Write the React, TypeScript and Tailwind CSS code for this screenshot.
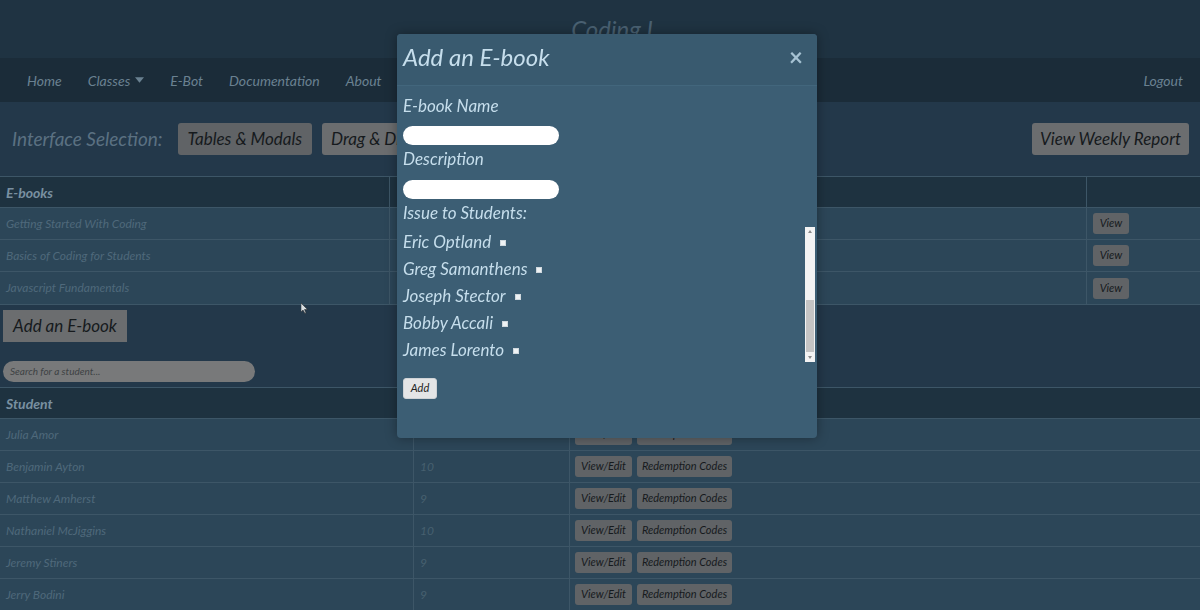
import React from "react";

const ebooks = [
  "Getting Started With Coding",
  "Basics of Coding for Students",
  "Javascript Fundamentals",
];

const students = [
  { name: "Julia Amor", grade: "" },
  { name: "Benjamin Ayton", grade: "10" },
  { name: "Matthew Amherst", grade: "9" },
  { name: "Nathaniel McJiggins", grade: "10" },
  { name: "Jeremy Stiners", grade: "9" },
  { name: "Jerry Bodini", grade: "9" },
];

const issueList = [
  "Eric Optland",
  "Greg Samanthens",
  "Joseph Stector",
  "Bobby Accali",
  "James Lorento",
];

function NavBar() {
  const links = ["Home", "Classes", "E-Bot", "Documentation", "About"];
  return (
    <div className="h-[44px] bg-[#1b2c39] flex items-center pl-[27px] pr-[17px] text-[14px] text-[#6a8191]">
      <div className="flex items-center gap-[26px]">
        {links.map((l) => (
          <span key={l} className="flex items-center gap-[5px]">
            {l}
            {l === "Classes" && (
              <svg width="9" height="6" viewBox="0 0 10 6">
                <path d="M0 0 L10 0 L5 6 Z" fill="#6a8191" />
              </svg>
            )}
          </span>
        ))}
      </div>
      <span className="ml-auto">Logout</span>
    </div>
  );
}

function GreyButton({ children, className = "" }: { children: React.ReactNode; className?: string }) {
  return (
    <button className={`bg-[#606366] text-[#161a1d] rounded-[3px] ${className}`}>
      {children}
    </button>
  );
}

function EbookTable() {
  return (
    <div className="border-y border-[#3d5667]">
      <div className="grid grid-cols-[390px_697px_1fr] h-[31px] bg-[#1e3240] text-[14px] font-bold text-[#7990a0] border-b border-[#3d5667]">
        <div className="px-[6px] flex items-center border-r border-[#3d5667]">E-books</div>
        <div className="border-r border-[#3d5667]" />
        <div />
      </div>
      {ebooks.map((b, i) => (
        <div
          key={b}
          className={`grid grid-cols-[390px_697px_1fr] h-[32px] bg-[#2c4658] text-[12px] text-[#4f697b] ${i < 2 ? "border-b border-[#3d5667]" : ""}`}
        >
          <div className="px-[6px] flex items-center border-r border-[#3d5667]">{b}</div>
          <div className="border-r border-[#3d5667]" />
          <div className="pl-[6px] flex items-center">
            <GreyButton className="w-[36px] h-[21px] text-[11px]">View</GreyButton>
          </div>
        </div>
      ))}
    </div>
  );
}

function StudentTable() {
  return (
    <div className="border-t border-[#3d5667]">
      <div className="grid grid-cols-[414px_156px_1fr] h-[31px] bg-[#1e3240] text-[14px] font-bold text-[#7990a0] border-b border-[#3d5667]">
        <div className="px-[6px] flex items-center">Student</div>
        <div />
        <div />
      </div>
      {students.map((s) => (
        <div
          key={s.name}
          className="grid grid-cols-[414px_156px_1fr] h-[32px] bg-[#2c4658] text-[12px] text-[#4f697b] border-b border-[#3d5667]"
        >
          <div className="px-[6px] flex items-center border-r border-[#3d5667]">{s.name}</div>
          <div className="px-[6px] flex items-center border-r border-[#3d5667] text-[#47606f]">{s.grade}</div>
          <div className="pl-[5px] flex items-center gap-[5px]">
            <GreyButton className="w-[57px] h-[21px] text-[11px]">View/Edit</GreyButton>
            <GreyButton className="w-[95px] h-[21px] text-[11px]">Redemption Codes</GreyButton>
          </div>
        </div>
      ))}
    </div>
  );
}

function AddEbookModal() {
  return (
    <div className="fixed left-[397px] top-[34px] w-[420px] h-[404px] rounded-[4px] bg-[#3c5e74] shadow-[0_0_12px_rgba(0,0,0,0.35)] text-[#c6deec] overflow-hidden">
      {/* header */}
      <div className="h-[52px] bg-[#395a6f] border-b border-[#42667c] flex items-center pl-[6px] pr-[14px] pb-[6px]">
        <span className="text-[24px] leading-none">Add an E-book</span>
        <span className="ml-auto text-[24px] font-bold not-italic text-[#a6c2d3] leading-none">×</span>
      </div>

      {/* body */}
      <div className="pt-[6px] text-[17px]">
        <div className="pl-[6px] leading-[27px]">E-book Name</div>
        <div className="pl-[6px] mt-[7px]">
          <div className="w-[156px] h-[19px] rounded-full bg-white" />
        </div>
        <div className="pl-[6px] leading-[27px]">Description</div>
        <div className="pl-[6px] mt-2">
          <div className="w-[156px] h-[19px] rounded-full bg-white" />
        </div>
        <div className="pl-[6px] leading-[27px]">Issue to Students:</div>

        <div className="flex h-[136px]">
          <div className="flex-1 pl-[6px] pt-[2px] text-[17px]">
            {issueList.map((n) => (
              <div key={n} className="h-[27px] flex items-center gap-[9px]">
                <span>{n}</span>
                <span className="w-[6px] h-[6px] bg-[#eef2f4] border border-[#cfd8de] mt-[2px]" />
              </div>
            ))}
          </div>
          {/* scrollbar */}
          <div className="w-[10px] mr-[2px] mt-[1px] h-[135px] bg-[#f3f3f3] flex flex-col items-center">
            <svg width="6" height="6" viewBox="0 0 6 6" className="mt-[2px]">
              <path d="M1 4 L5 4 L3 1 Z" fill="#8a8a8a" />
            </svg>
            <div className="mt-auto w-[8px] h-[52px] bg-[#c4c4c4]" />
            <svg width="6" height="6" viewBox="0 0 6 6" className="mb-[2px] mt-[2px]">
              <path d="M1 2 L5 2 L3 5 Z" fill="#8a8a8a" />
            </svg>
          </div>
        </div>

        <div className="pl-[6px] mt-[11px]">
          <button className="w-[34px] h-[21px] rounded-[3px] bg-[#e4e5e6] border border-[#cfd3d6] text-[11px] text-[#222]">
            Add
          </button>
        </div>
      </div>
    </div>
  );
}

export default function App() {
  return (
    <div className="relative w-full h-[610px] overflow-hidden bg-[#23384a] italic font-[Lato,sans-serif]">
      {/* title */}
      <div className="h-[58px] bg-[#1f3342] flex items-center justify-center">
        <span className="text-[24px] text-[#4a6172] ml-[24px]">Coding I</span>
      </div>

      <NavBar />

      {/* interface selection */}
      <div className="h-[74px] flex items-center pl-[12px] pr-[11px]">
        <span className="text-[19px] text-[#5b7182] mr-[15px]">Interface Selection:</span>
        <GreyButton className="h-[32px] px-[10px] text-[17px]">Tables &amp; Modals</GreyButton>
        <button className="ml-[10px] h-[32px] px-[9px] text-[17px] bg-[#6b6d6f] text-[#161a1d] rounded-[3px]">
          Drag &amp; Drop
        </button>
        <button className="ml-auto h-[32px] px-[8px] text-[17px] bg-[#6b6d6f] text-[#161a1d] rounded-[3px]">
          View Weekly Report
        </button>
      </div>

      <EbookTable />

      <div className="pl-[3px] pt-[5px]">
        <button className="h-[32px] w-[124px] text-[17px] bg-[#6b6d6f] text-[#161a1d]">
          Add an E-book
        </button>
      </div>

      <div className="pl-[3px] pt-[19px] pb-[5px]">
        <div className="w-[252px] h-[21px] rounded-full bg-[#78797a] flex items-center px-[7px] text-[10px] text-[#3e4244]">
          Search for a student...
        </div>
      </div>

      <StudentTable />

      {/* mouse cursor */}
      <svg className="absolute left-[301px] top-[303px]" width="7" height="11" viewBox="0 0 7 11">
        <path d="M0 0 L0 9 L2 7 L4 10.5 L5 10 L3.5 6.5 L6.5 6.5 Z" fill="#d8dde0" stroke="#222" strokeWidth="0.5" />
      </svg>

      <AddEbookModal />
    </div>
  );
}
